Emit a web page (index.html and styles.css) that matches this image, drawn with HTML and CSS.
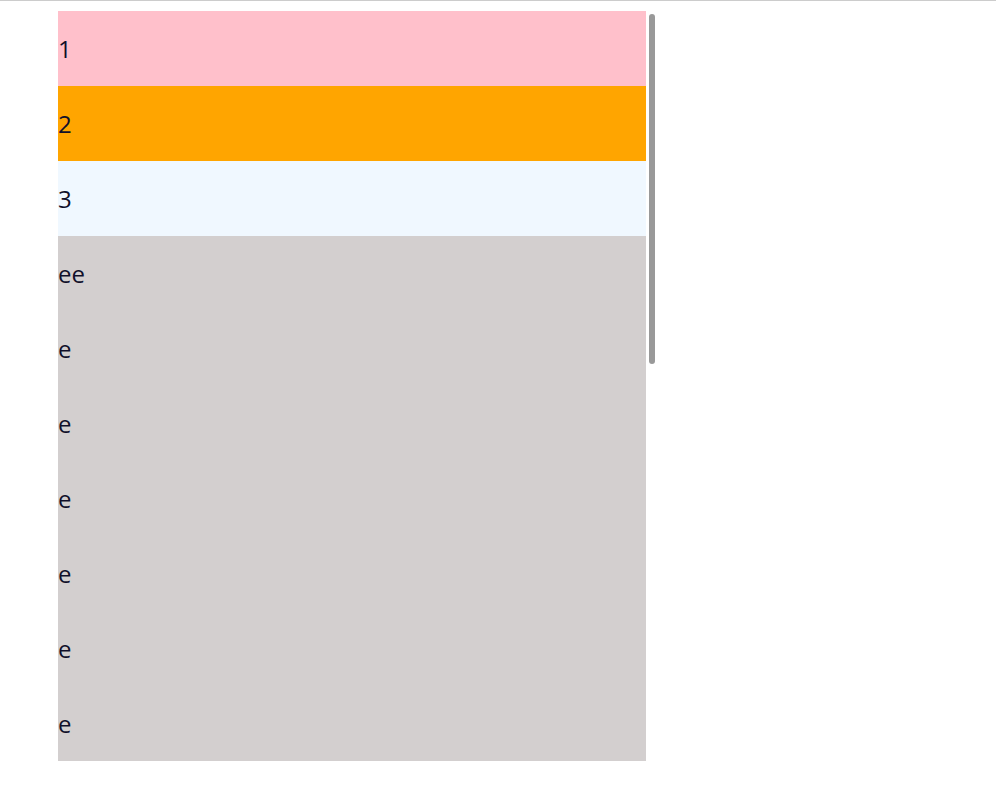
FILE: index.html
```html
<!DOCTYPE html>
<html>
<head>
<meta charset="utf-8">
<link rel="stylesheet" href="styles.css">
</head>
<body>
<div class="frame">
  <div class="list">
    <div class="row pink">1</div>
    <div class="row orange">2</div>
    <div class="row alice">3</div>
    <div class="row">ee</div>
    <div class="row">e</div>
    <div class="row">e</div>
    <div class="row">e</div>
    <div class="row">e</div>
    <div class="row">e</div>
    <div class="row">e</div>
  </div>
  <div class="track"><div class="thumb"></div></div>
</div>
</body>
</html>
```
FILE: styles.css
```css
html, body {
  margin: 0;
  padding: 0;
  background: #fff;
}
body {
  border-top: 1px solid #cccccc;
  font-family: "Open Sans", "Noto Sans", sans-serif;
  font-size: 24px;
  color: #10102a;
}
.frame {
  display: flex;
  margin: 10px 0 0 58px;
  height: 750px;
}
.list {
  width: 588px;
  height: 750px;
  overflow: hidden;
  background: #d3cfcf;
}
.track {
  width: 12px;
  padding: 3px 3px;
  box-sizing: border-box;
}
.thumb {
  width: 6px;
  height: 350px;
  background: #999999;
  border-radius: 3px;
}
.row {
  height: 75px;
  display: flex;
  align-items: center;
}
.pink { background: #ffc0cb; }
.orange { background: #ffa500; }
.alice { background: #f0f8ff; }
```
